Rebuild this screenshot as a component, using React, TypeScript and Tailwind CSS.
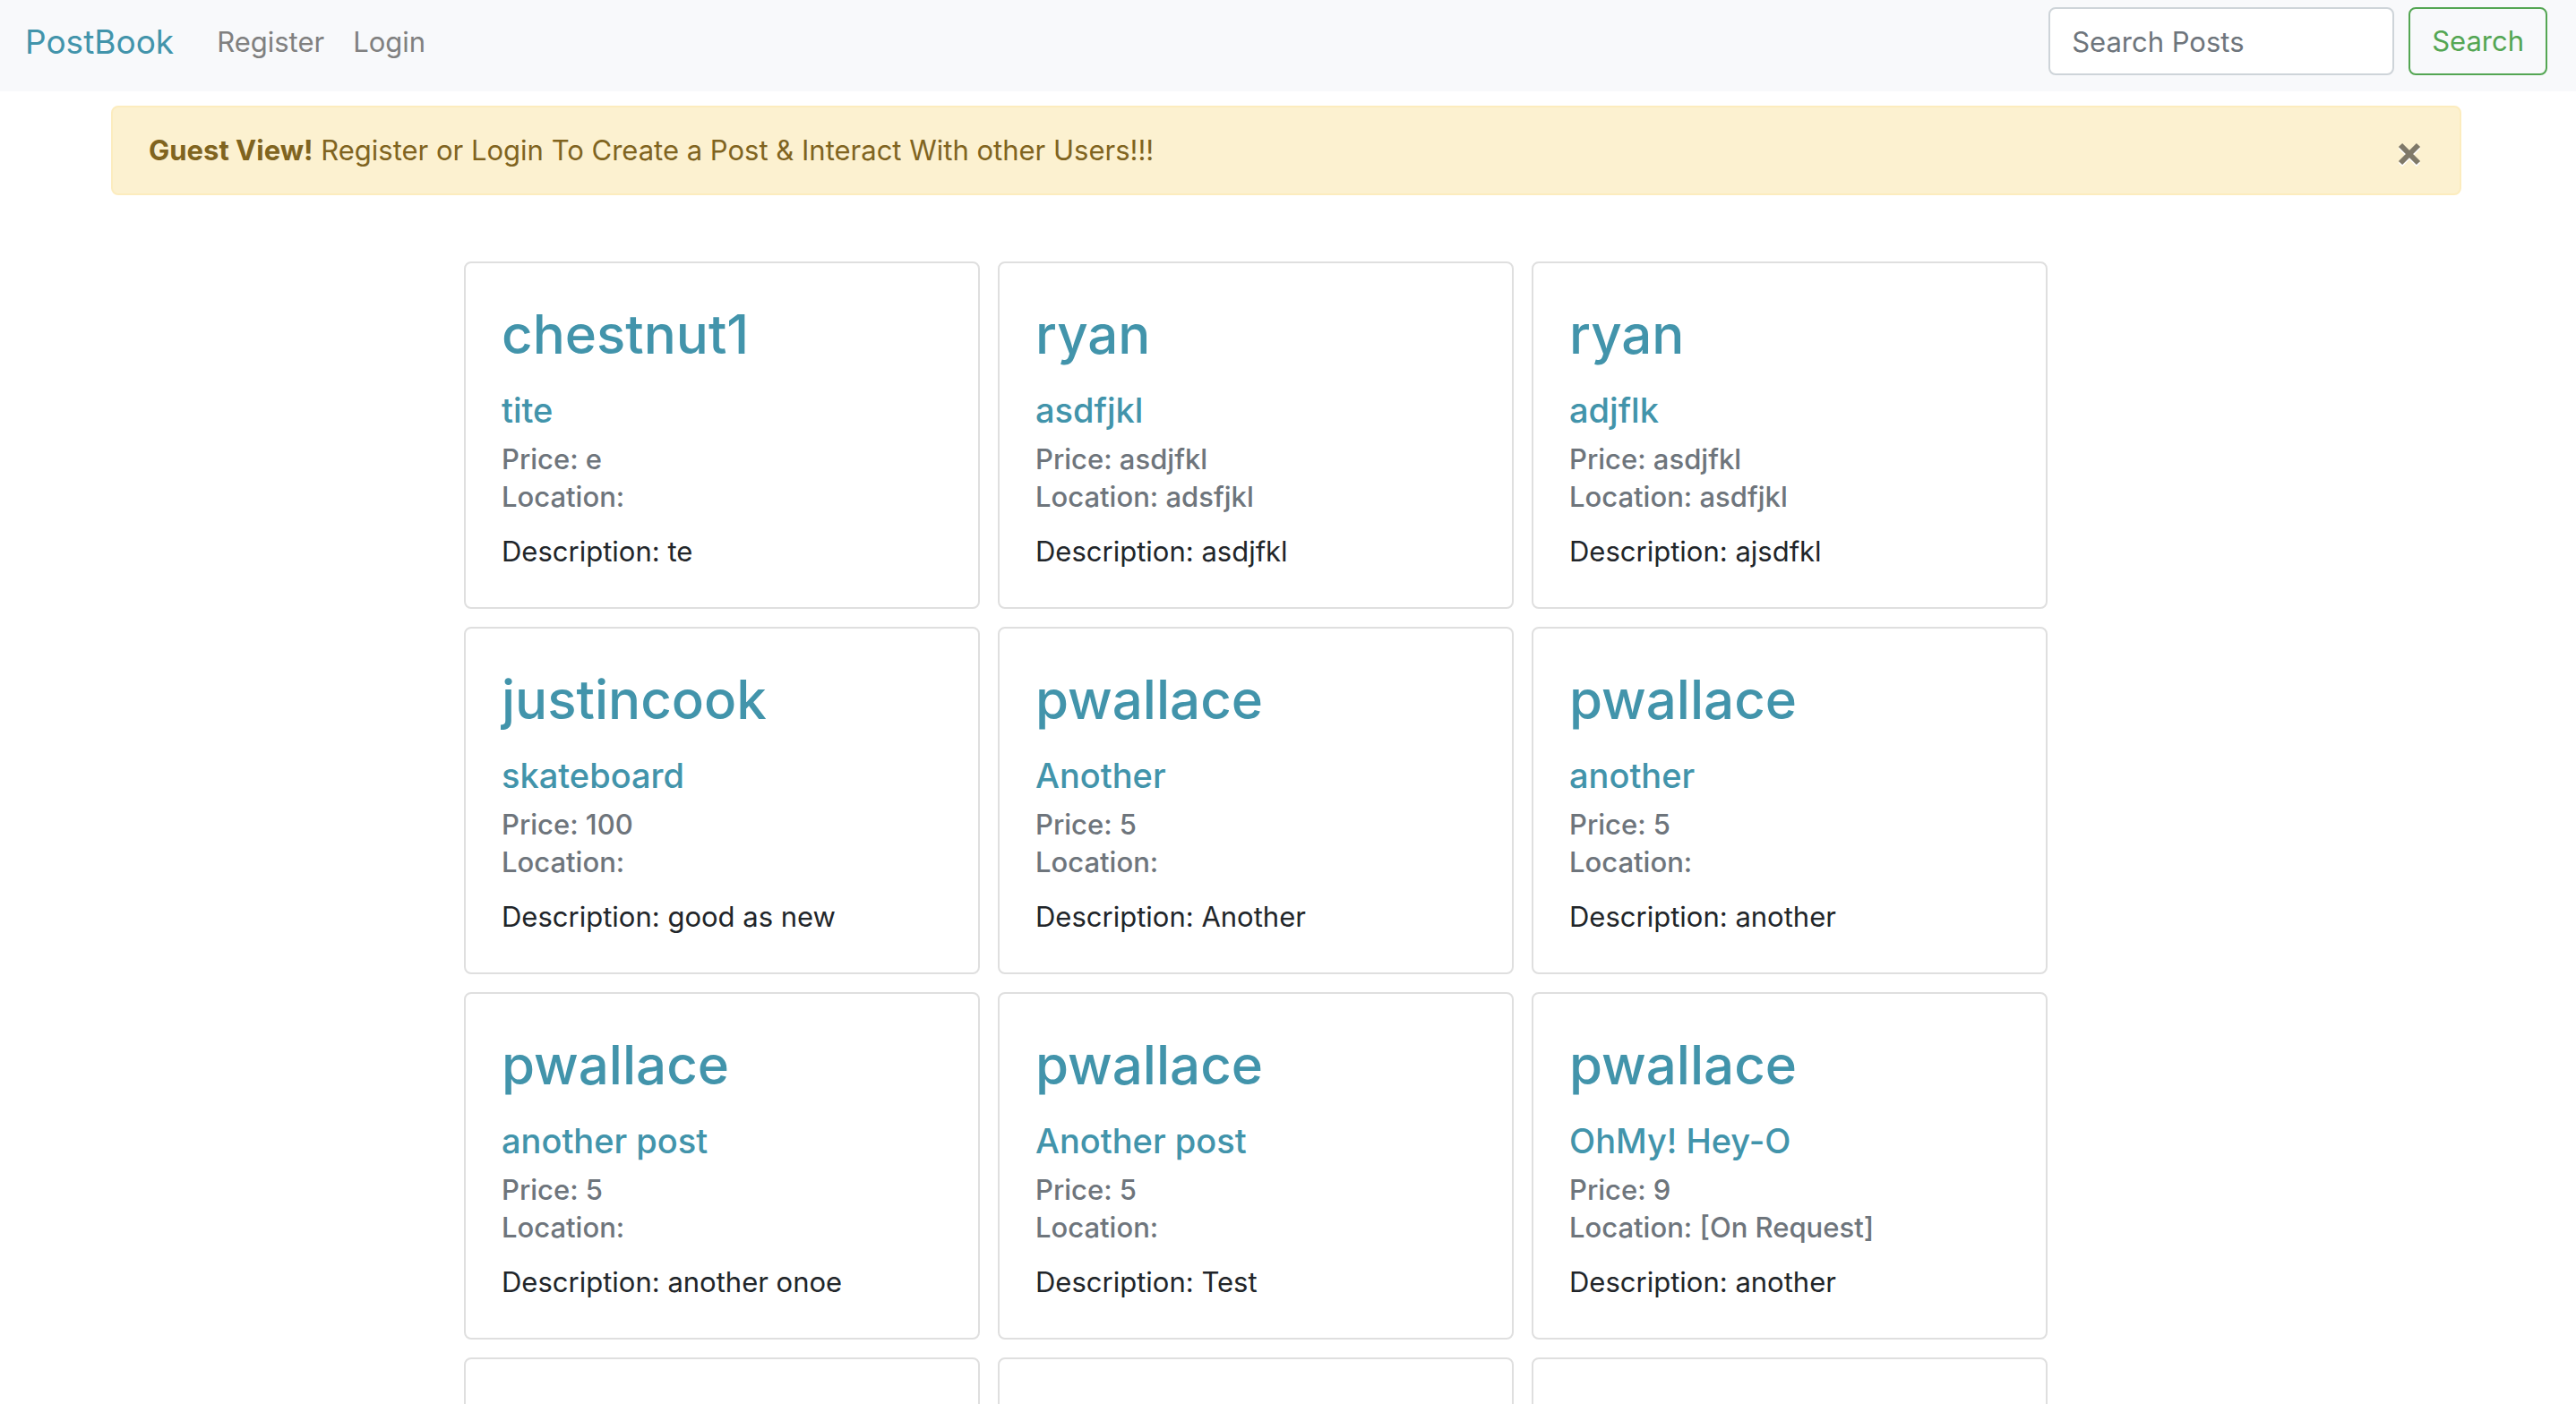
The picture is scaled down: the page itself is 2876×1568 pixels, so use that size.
import { useState } from "react";

type Post = {
  user: string;
  title: string;
  price: string;
  location: string;
  description: string;
};

const posts: Post[] = [
  { user: "chestnut1", title: "tite", price: "e", location: "", description: "te" },
  { user: "ryan", title: "asdfjkl", price: "asdjfkl", location: "adsfjkl", description: "asdjfkl" },
  { user: "ryan", title: "adjflk", price: "asdjfkl", location: "asdfjkl", description: "ajsdfkl" },
  { user: "justincook", title: "skateboard", price: "100", location: "", description: "good as new" },
  { user: "pwallace", title: "Another", price: "5", location: "", description: "Another" },
  { user: "pwallace", title: "another", price: "5", location: "", description: "another" },
  { user: "pwallace", title: "another post", price: "5", location: "", description: "another onoe" },
  { user: "pwallace", title: "Another post", price: "5", location: "", description: "Test" },
  { user: "pwallace", title: "OhMy! Hey-O", price: "9", location: "[On Request]", description: "another" },
];

function Navbar() {
  return (
    <nav className="flex items-start justify-between bg-[#f8f9fb] pt-2 pr-8 pb-4 pl-7">
      <div className="flex h-[78px] items-center">
        <a href="#" className="mr-12 text-[37px] leading-[60px] text-[#4294ab]">
          PostBook
        </a>
        <div className="flex gap-8 leading-[48px] text-[#808080]">
          <a href="#register">Register</a>
          <a href="#login">Login</a>
        </div>
      </div>
      <form className="flex gap-4" onSubmit={(e) => e.preventDefault()}>
        <input
          type="search"
          aria-label="Search Posts"
          placeholder="Search Posts"
          className="h-[76px] w-[386px] rounded-lg border-2 border-[#ced4d9] bg-white px-6 text-[#495057] placeholder:text-[#6e757c]"
        />
        <button
          type="submit"
          className="h-[76px] rounded-lg border-2 border-[#54a653] px-6 text-[#54a653]"
        >
          Search
        </button>
      </form>
    </nav>
  );
}

function Alert({ onClose }: { onClose: () => void }) {
  return (
    <div
      role="alert"
      className="mt-4 mr-32 ml-[124px] flex items-center justify-between rounded-lg border-2 border-[#fcecbe] bg-[#fcf1d0] px-10 py-6 leading-[48px] text-[#80641f]"
    >
      <p>
        <strong className="font-bold">Guest View!</strong> Register or Login To Create a Post &amp;
        Interact With other Users!!!
      </p>
      <button type="button" aria-label="Close" onClick={onClose} className="mt-2 p-1 text-[#7f7969]">
        <svg
          viewBox="0 0 24 24"
          className="size-6 overflow-visible drop-shadow-[0_2px_0_#fff]"
          fill="none"
          stroke="currentColor"
          strokeWidth="6"
        >
          <path d="M2 2 22 22M22 2 2 22" />
        </svg>
      </button>
    </div>
  );
}

function PostCard({ post }: { post: Post }) {
  return (
    <article className="rounded-lg border-2 border-[#dfdfdf] bg-white px-10 pt-10 pb-[38px]">
      <h2 className="mb-[22px] text-[60px] leading-[78px] font-medium">
        <a href="#user" className="text-[#4294ab]">
          {post.user}
        </a>
      </h2>
      <h3 className="mb-2.5 text-[38px] leading-[48px] font-medium">
        <a href="#post" className="text-[#4294ab]">
          {post.title}
        </a>
      </h3>
      <div className="mb-4 leading-[42px] font-medium text-[#6e757c]">
        <p>Price: {post.price}</p>
        <p>Location: {post.location}</p>
      </div>
      <p className="leading-[48px]">Description: {post.description}</p>
    </article>
  );
}

export default function App() {
  const [showAlert, setShowAlert] = useState(true);
  return (
    <div className="h-screen overflow-hidden bg-white font-['Inter',sans-serif] text-[31px] text-[#212529]">
      <Navbar />
      {showAlert && <Alert onClose={() => setShowAlert(false)} />}
      <main className="mt-[74px] grid grid-cols-1 gap-5 px-8 lg:grid-cols-3 min-[2400px]:pr-[590px] min-[2400px]:pl-[518px]">
        {posts.map((post, i) => (
          <PostCard key={i} post={post} />
        ))}
        {[0, 1, 2].map((i) => (
          <article key={i} className="h-[388px] rounded-lg border-2 border-[#dfdfdf] bg-white" />
        ))}
      </main>
    </div>
  );
}
